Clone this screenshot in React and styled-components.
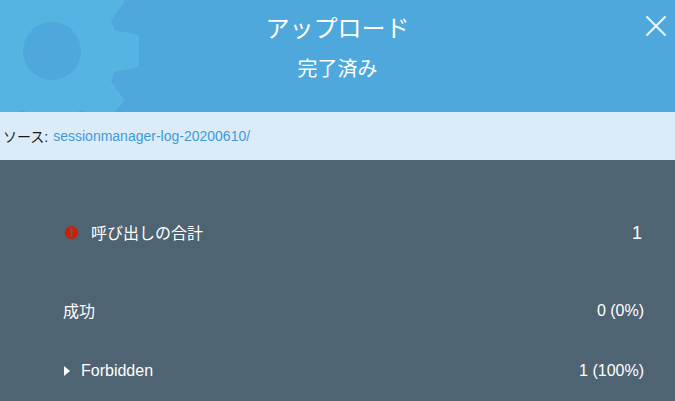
import styled, { createGlobalStyle } from "styled-components";
import { X } from "lucide-react";

const GlobalStyle = createGlobalStyle`
    html, body {
        margin: 0;
        padding: 0;
        background-color: #4f6472;
    }
`;

const Page = styled.div`
    width: 675px;
    height: 401px;
    overflow: hidden;
    display: flex;
    flex-direction: column;
    font-family: "Liberation Sans", "Noto Sans CJK JP", sans-serif;
    background-color: #4f6472;
`;

const Header = styled.header`
    position: relative;
    height: 112px;
    flex-shrink: 0;
    overflow: hidden;
    background-color: #4ea8dc;
    color: #fff;
    text-align: center;
`;

const GearMark = styled.svg`
    position: absolute;
    left: 0;
    top: 0;
`;

const Title = styled.h1`
    position: relative;
    margin: 0;
    padding-top: 12px;
    font-size: 24px;
    line-height: 34px;
    font-weight: 400;
`;

const Subtitle = styled.h2`
    position: relative;
    margin: 0;
    padding-top: 8px;
    font-size: 20px;
    line-height: 30px;
    font-weight: 400;
`;

const CloseButton = styled.button`
    position: absolute;
    top: 8px;
    right: 1px;
    width: 36px;
    height: 36px;
    padding: 0;
    border: none;
    background-color: transparent;
    color: #e6f3fb;
    display: grid;
    place-content: center;
    cursor: pointer;
`;

const SourceBar = styled.div`
    height: 48px;
    flex-shrink: 0;
    display: flex;
    align-items: center;
    gap: 5px;
    padding-left: 3px;
    background-color: #dbecf8;
    color: #1a1a1a;
    font-size: 14px;
`;

const SourceLink = styled.a`
    color: #3f99d8;
    text-decoration: none;
    cursor: pointer;
`;

const Stats = styled.div`
    display: flex;
    flex-direction: column;
    padding: 55px 31px 0 63px;
    color: #fff;
    font-size: 16px;
`;

const Row = styled.div`
    height: 36px;
    margin-bottom: ${(props) => props.$gap}px;
    display: flex;
    align-items: center;
    justify-content: space-between;
`;

const Label = styled.span`
    display: flex;
    align-items: center;
    gap: ${(props) => props.$gap || 0}px;
    padding-bottom: ${(props) => (props.$cjk ? 2 : 0)}px;
`;

const ErrorIcon = styled.svg`
    margin-left: 2px;
    flex-shrink: 0;
`;

const Caret = styled.span`
    width: 0;
    height: 0;
    border-style: solid;
    border-width: 5.5px 0 5.5px 6px;
    border-color: transparent transparent transparent #fff;
    margin-left: 1px;
`;

const Total = styled.span`
    font-size: 18px;
    margin-right: 2px;
`;

const teeth = [0, 45, 90, 135, 180, 225, 270, 315];

const App = () => {
    return (
        <Page>
            <GlobalStyle />
            <Header>
                <GearMark width="150" height="112" viewBox="0 0 150 112" aria-hidden="true">
                    <circle cx="52" cy="51" r="66" fill="#56b4e3" />
                    {teeth.map((angle) => (
                        <path
                            key={angle}
                            d="M112 30 L135 34 Q139 34.5 139 38 L139 64 Q139 67.5 135 68 L112 72 Z"
                            fill="#56b4e3"
                            transform={`rotate(${angle} 52 51)`}
                        />
                    ))}
                    <circle cx="52" cy="51" r="29" fill="#4ea8dc" />
                </GearMark>
                <Title>アップロード</Title>
                <Subtitle>完了済み</Subtitle>
                <CloseButton aria-label="閉じる">
                    <X size={36} strokeWidth={1.4} />
                </CloseButton>
            </Header>
            <SourceBar>
                ソース:
                <SourceLink>sessionmanager-log-20200610/</SourceLink>
            </SourceBar>
            <Stats>
                <Row $gap={42}>
                    <Label $gap={13} $cjk>
                        <ErrorIcon width="13" height="13" viewBox="0 0 13 13" aria-hidden="true">
                            <circle cx="6.5" cy="6.5" r="6.5" fill="#d01c00" />
                            <rect x="5.5" y="2.5" width="2" height="5.5" fill="#4f6472" />
                            <rect x="5.5" y="9" width="2" height="2" fill="#4f6472" />
                        </ErrorIcon>
                        呼び出しの合計
                    </Label>
                    <Total>1</Total>
                </Row>
                <Row $gap={24}>
                    <Label $cjk>成功</Label>
                    <span>0 (0%)</span>
                </Row>
                <Row $gap={0}>
                    <Label $gap={11}>
                        <Caret />
                        Forbidden
                    </Label>
                    <span>1 (100%)</span>
                </Row>
            </Stats>
        </Page>
    );
};

export default App;
